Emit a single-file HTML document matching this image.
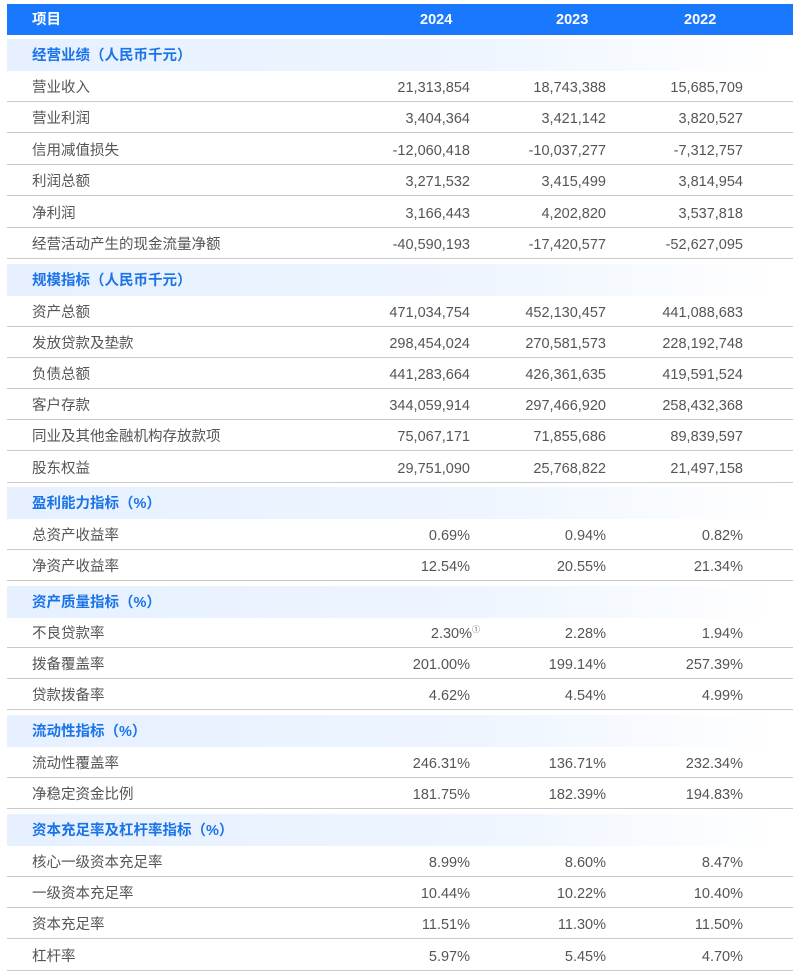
<!DOCTYPE html>
<html><head><meta charset="utf-8"><style>
body{margin:0;width:806px;height:977px;background:#fff;position:relative;overflow:hidden;font-family:"Liberation Sans","Noto Sans CJK SC",sans-serif;font-size:14.5px;color:#555;}
.r{position:absolute;left:7px;width:786px;height:31px;border-bottom:1px solid #c9c9c9;box-sizing:border-box;}
.r span{position:absolute;top:2px;line-height:30px;}
.l{left:25px}
.a{right:323px}.b{right:187px}.c{right:50px}
.s{position:absolute;left:7px;width:786px;height:32px;background:linear-gradient(90deg,#e6f0ff 0%,#eef5ff 60%,#ffffff 98%);color:#1a73e8;font-weight:bold;}
.s span{position:absolute;top:1px;left:25px;line-height:32px;}
.h{position:absolute;left:7px;top:4px;width:786px;height:31px;background:#1a78ff;color:#fff;font-weight:bold;}
.h span{position:absolute;top:1px;line-height:31px;}
sup{font-size:8px;position:relative;top:-6px;vertical-align:baseline;line-height:0;}
</style></head><body>
<div class="h"><span style="left:25px">项目</span><span style="left:413px">2024</span><span style="left:549px">2023</span><span style="left:677px">2022</span></div>

<div class="s" style="top:39px"><span>经营业绩（人民币千元）</span></div>
<div class="r" style="top:71px"><span class="l">营业收入</span><span class="a">21,313,854</span><span class="b">18,743,388</span><span class="c">15,685,709</span></div>
<div class="r" style="top:102px"><span class="l">营业利润</span><span class="a">3,404,364</span><span class="b">3,421,142</span><span class="c">3,820,527</span></div>
<div class="r" style="top:134px"><span class="l">信用减值损失</span><span class="a">-12,060,418</span><span class="b">-10,037,277</span><span class="c">-7,312,757</span></div>
<div class="r" style="top:165px"><span class="l">利润总额</span><span class="a">3,271,532</span><span class="b">3,415,499</span><span class="c">3,814,954</span></div>
<div class="r" style="top:197px"><span class="l">净利润</span><span class="a">3,166,443</span><span class="b">4,202,820</span><span class="c">3,537,818</span></div>
<div class="r" style="top:228px"><span class="l">经营活动产生的现金流量净额</span><span class="a">-40,590,193</span><span class="b">-17,420,577</span><span class="c">-52,627,095</span></div>

<div class="s" style="top:264px"><span>规模指标（人民币千元）</span></div>
<div class="r" style="top:296px"><span class="l">资产总额</span><span class="a">471,034,754</span><span class="b">452,130,457</span><span class="c">441,088,683</span></div>
<div class="r" style="top:327px"><span class="l">发放贷款及垫款</span><span class="a">298,454,024</span><span class="b">270,581,573</span><span class="c">228,192,748</span></div>
<div class="r" style="top:358px"><span class="l">负债总额</span><span class="a">441,283,664</span><span class="b">426,361,635</span><span class="c">419,591,524</span></div>
<div class="r" style="top:389px"><span class="l">客户存款</span><span class="a">344,059,914</span><span class="b">297,466,920</span><span class="c">258,432,368</span></div>
<div class="r" style="top:420px"><span class="l">同业及其他金融机构存放款项</span><span class="a">75,067,171</span><span class="b">71,855,686</span><span class="c">89,839,597</span></div>
<div class="r" style="top:452px"><span class="l">股东权益</span><span class="a">29,751,090</span><span class="b">25,768,822</span><span class="c">21,497,158</span></div>

<div class="s" style="top:487px"><span>盈利能力指标（%）</span></div>
<div class="r" style="top:519px"><span class="l">总资产收益率</span><span class="a">0.69%</span><span class="b">0.94%</span><span class="c">0.82%</span></div>
<div class="r" style="top:550px"><span class="l">净资产收益率</span><span class="a">12.54%</span><span class="b">20.55%</span><span class="c">21.34%</span></div>

<div class="s" style="top:586px"><span>资产质量指标（%）</span></div>
<div class="r" style="top:617px"><span class="l">不良贷款率</span><span class="a" style="right:313px">2.30%<sup>①</sup></span><span class="b">2.28%</span><span class="c">1.94%</span></div>
<div class="r" style="top:648px"><span class="l">拨备覆盖率</span><span class="a">201.00%</span><span class="b">199.14%</span><span class="c">257.39%</span></div>
<div class="r" style="top:679px"><span class="l">贷款拨备率</span><span class="a">4.62%</span><span class="b">4.54%</span><span class="c">4.99%</span></div>

<div class="s" style="top:715px"><span>流动性指标（%）</span></div>
<div class="r" style="top:747px"><span class="l">流动性覆盖率</span><span class="a">246.31%</span><span class="b">136.71%</span><span class="c">232.34%</span></div>
<div class="r" style="top:778px"><span class="l">净稳定资金比例</span><span class="a">181.75%</span><span class="b">182.39%</span><span class="c">194.83%</span></div>

<div class="s" style="top:814px"><span>资本充足率及杠杆率指标（%）</span></div>
<div class="r" style="top:846px"><span class="l">核心一级资本充足率</span><span class="a">8.99%</span><span class="b">8.60%</span><span class="c">8.47%</span></div>
<div class="r" style="top:877px"><span class="l">一级资本充足率</span><span class="a">10.44%</span><span class="b">10.22%</span><span class="c">10.40%</span></div>
<div class="r" style="top:908px"><span class="l">资本充足率</span><span class="a">11.51%</span><span class="b">11.30%</span><span class="c">11.50%</span></div>
<div class="r" style="top:940px"><span class="l">杠杆率</span><span class="a">5.97%</span><span class="b">5.45%</span><span class="c">4.70%</span></div>
</body></html>
